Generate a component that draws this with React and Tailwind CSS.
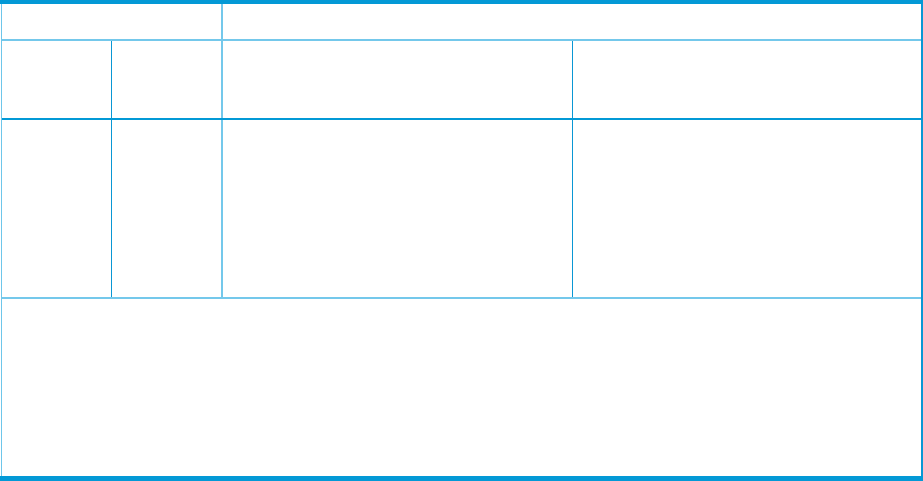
export default function App() {
  return (
    <div className="w-[923px] h-[481px] bg-white">
      <div className="w-[923px] h-[481px] flex flex-col border-t-4 border-b-[5px] border-t-[#0399d6] border-b-[#0399d6] pl-px">
        <div className="flex-1 flex flex-col border-l border-r-2 border-l-[#6ec6ea] border-r-[#0a97d4]">
          <div className="h-[37px] flex border-b-2 border-b-[#74c8eb]">
            <div className="w-[221px] border-r-2 border-r-[#74c8eb]" />
            <div className="flex-1" />
          </div>
          <div className="h-[79px] flex border-b-2 border-b-[#0399d6]">
            <div className="w-[110px] border-r border-r-[#0a97d4]" />
            <div className="w-[111px] border-r-2 border-r-[#74c8eb]" />
            <div className="w-[350px] border-r border-r-[#0a97d4]" />
            <div className="flex-1" />
          </div>
          <div className="h-[179px] flex border-b-2 border-b-[#74c8eb]">
            <div className="w-[110px] border-r border-r-[#0a97d4]" />
            <div className="w-[111px] border-r-2 border-r-[#74c8eb]" />
            <div className="w-[350px] border-r border-r-[#0a97d4]" />
            <div className="flex-1" />
          </div>
          <div className="flex-1" />
        </div>
      </div>
    </div>
  );
}
